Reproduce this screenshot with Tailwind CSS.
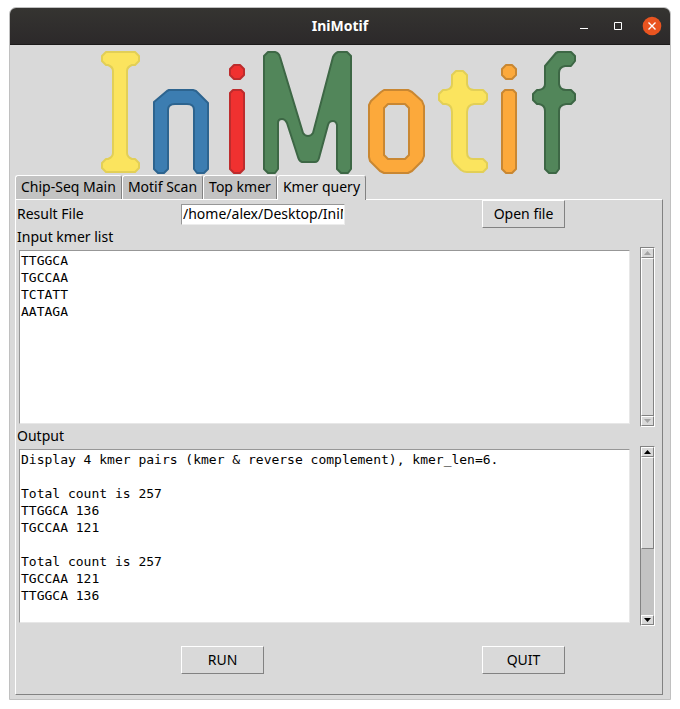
<!DOCTYPE html>
<html lang="en">
<head>
<meta charset="utf-8">
<meta name="viewport" content="width=device-width, initial-scale=1">
<title>IniMotif</title>
<script src="https://cdn.jsdelivr.net/npm/@tailwindcss/browser@4"></script>
</head>
<body class="bg-white px-[9px] pt-[7px] pb-[9px] font-['Noto_Sans',sans-serif] text-[14px] leading-[18px] text-black">
<main class="overflow-hidden rounded-t-[7px] border border-[#c0c0c0] bg-[#d9d9d9]">
  <header class="grid h-[37px] grid-cols-[1fr_auto_1fr] items-center border-b border-[#1c1a1a] bg-linear-to-b from-[#353431] to-[#2c292a] text-white">
    <h1 class="col-start-2 font-bold">IniMotif</h1>
    <div class="flex items-center justify-end gap-[14px] pr-[8px]">
      <button type="button" aria-label="Minimize" class="size-5"><svg viewBox="0 0 20 20" class="size-5"><path d="M6 12.5h8" stroke="#fff"/></svg></button>
      <button type="button" aria-label="Maximize" class="size-5"><svg viewBox="0 0 20 20" class="size-5"><path d="M6.5 6.5h7v7h-7z" fill="none" stroke="#fff"/></svg></button>
      <button type="button" aria-label="Close" class="size-5"><svg viewBox="0 0 20 20" class="size-5"><circle cx="10" cy="10" r="9.3" fill="#e95420"/><path d="M6.5 6.5l7 7M13.5 6.5l-7 7" stroke="#fff" stroke-width="1.4"/></svg></button>
    </div>
  </header>

  <svg role="img" aria-label="IniMotif" viewBox="100 45 480 130" class="mx-auto block w-[480px] max-w-full" stroke-width="2" stroke-linejoin="round">
    <g fill="#fbe45e" stroke="#e2cf57">
      <path d="M106 52H135L139 56V61L135 65H132Q127 67 127 71V153Q127 157 132 159H135L139 163V168L135 172H106L102 168V163L106 159H108Q113 157 113 153V71Q113 67 108 65H106L102 61V56Z"/>
      <path d="M456 71H463L467 75V84Q468 90 474 90H483L487 94V100L483 104H474Q467 105 467 112V152Q467 159 473 159H483L487 163V168L483 172H467Q464 172 461 170L454 163Q452 160 452 157V112Q452 105 446 104H443L439 100V94L443 90H446Q452 89 452 84V75Z"/>
    </g>
    <path fill="#3c7db1" stroke="#2d648f" d="M154 169V102L167 91L169 90H193L196 91L208 103V169L204 173H197L194 169V110Q194 104 187 104H175Q168 104 168 110V169L164 173H158Z"/>
    <g fill="#f03130" stroke="#bd2c2d">
      <path d="M234 65H240L244 69V75L240 79H234L230 75V69Z"/>
      <path d="M233 90H241L244 93V169L240 173H234L230 169V93Z"/>
    </g>
    <g fill="#52865a" stroke="#3d6745">
      <path d="M264 56L268 52H275Q279 53 280 57L303 133Q305 136 308 136Q311 136 313 133L333 57Q335 53 338 52H347L351 56V169L348 173H341L337 169V125Q336 121 333 121Q329 121 328 125L319 158Q318 162 315 162H302Q299 161 298 157L287 123Q285 119 282 119Q278 119 278 123V169L275 173H268L264 169Z"/>
      <path d="M545 66L556 53L558 52H571L575 56V61L571 66H565Q559 67 559 73V84Q560 90 566 90H571L575 94V100L571 104H566Q559 105 559 111V169L556 173H549L545 169V111Q545 105 539 104H537L533 100V94L537 90H539Q545 89 545 84Z"/>
    </g>
    <g fill="#fca93b" stroke="#c98732">
      <path fill-rule="evenodd" d="M384 90H408L412 92L422 101L424 106V156L422 161L412 171L408 173H384L380 171L370 161L369 157V105L371 101L381 92ZM388 104L384 108V155L388 159H405L409 155V108L405 104Z"/>
      <path d="M506 65H512L516 69V75L512 79H506L502 75V69Z"/>
      <path d="M505 90H513L516 93V169L512 173H506L502 169V93Z"/>
    </g>
  </svg>

  <div class="pr-[7px] pb-[4px] pl-[5px]">
    <nav role="tablist" class="flex h-[24px] items-stretch">
      <button type="button" role="tab" class="rounded-t-[3px] border border-b-0 border-t-white border-r-[#828282] border-l-white bg-[#c3c3c3] px-[5px] pb-px">Chip-Seq Main</button>
      <button type="button" role="tab" class="rounded-t-[3px] border border-b-0 border-t-white border-r-[#828282] border-l-white bg-[#c3c3c3] px-[5px] pb-px">Motif Scan</button>
      <button type="button" role="tab" class="rounded-t-[3px] border border-b-0 border-t-white border-r-[#828282] border-l-white bg-[#c3c3c3] px-[5px] pb-px">Top kmer</button>
      <button type="button" role="tab" aria-selected="true" class="relative -mb-px rounded-t-[3px] border border-b-0 border-t-white border-r-[#828282] border-l-white bg-[#d9d9d9] px-[5px] pb-[2px]">Kmer query</button>
    </nav>

    <section class="border border-t-white border-r-[#828282] border-b-[#828282] border-l-white">
      <div class="grid grid-cols-[165fr_301fr_180fr] items-center">
        <label for="result" class="pb-px pl-px">Result File</label>
        <input id="result" type="text" value="/home/alex/Desktop/IniMotif" class="h-[21px] w-[164px] border border-t-[#979797] border-r-[#ececec] border-b-[#ececec] border-l-[#979797] bg-white px-px pb-px outline-none">
        <button type="button" class="h-[28px] w-[83px] border border-t-white border-r-[#828282] border-b-[#828282] border-l-white pb-px">Open file</button>
      </div>

      <label for="kmers" class="block h-[19px] pl-px">Input kmer list</label>
      <div class="flex h-[180px] pr-[7px] pl-[3px]">
        <textarea id="kmers" spellcheck="false" class="my-[3px] mr-[10px] min-w-0 flex-1 resize-none overflow-hidden border border-t-[#979797] border-r-[#e7e7e7] border-b-[#e7e7e7] border-l-[#979797] bg-white px-px py-px font-['DejaVu_Sans_Mono',monospace] text-[13px] leading-[17px] outline-none">TTGGCA
TGCCAA
TCTATT
AATAGA</textarea>
        <div class="flex w-[15px] flex-col border border-t-[#828282] border-r-white border-b-white border-l-[#828282] bg-[#c3c3c3]">
          <button type="button" aria-label="Scroll up" class="flex h-[10px] items-center justify-center border border-t-white border-r-[#828282] border-b-[#828282] border-l-white bg-[#d9d9d9]"><svg viewBox="0 0 7 4" class="h-[4px] w-[7px]"><path d="M3.5 0L7 4H0Z" fill="#a3a3a3"/></svg></button>
          <div class="flex-1 border border-t-white border-r-[#828282] border-b-[#828282] border-l-white bg-[#d9d9d9]"></div>
          <button type="button" aria-label="Scroll down" class="flex h-[10px] items-center justify-center border border-t-white border-r-[#828282] border-b-[#828282] border-l-white bg-[#d9d9d9]"><svg viewBox="0 0 7 4" class="h-[4px] w-[7px]"><path d="M0 0H7L3.5 4Z" fill="#a3a3a3"/></svg></button>
        </div>
      </div>

      <label for="output" class="block h-[19px] pl-px">Output</label>
      <div class="flex h-[180px] pr-[7px] pl-[3px]">
        <textarea id="output" spellcheck="false" class="my-[3px] mr-[10px] min-w-0 flex-1 resize-none overflow-hidden border border-t-[#979797] border-r-[#e7e7e7] border-b-[#e7e7e7] border-l-[#979797] bg-white px-px py-px font-['DejaVu_Sans_Mono',monospace] text-[13px] leading-[17px] outline-none">Display 4 kmer pairs (kmer &amp; reverse complement), kmer_len=6.

Total count is 257
TTGGCA 136
TGCCAA 121

Total count is 257
TGCCAA 121
TTGGCA 136
</textarea>
        <div class="flex w-[15px] flex-col border border-t-[#828282] border-r-white border-b-white border-l-[#828282] bg-[#c3c3c3]">
          <button type="button" aria-label="Scroll up" class="flex h-[10px] items-center justify-center border border-t-white border-r-[#828282] border-b-[#828282] border-l-white bg-[#d9d9d9]"><svg viewBox="0 0 7 4" class="h-[4px] w-[7px]"><path d="M3.5 0L7 4H0Z"/></svg></button>
          <div class="flex-1">
            <div class="h-[92px] border border-t-white border-r-[#828282] border-b-[#828282] border-l-white bg-[#d9d9d9]"></div>
          </div>
          <button type="button" aria-label="Scroll down" class="flex h-[10px] items-center justify-center border border-t-white border-r-[#828282] border-b-[#828282] border-l-white bg-[#d9d9d9]"><svg viewBox="0 0 7 4" class="h-[4px] w-[7px]"><path d="M0 0H7L3.5 4Z"/></svg></button>
        </div>
      </div>

      <div class="grid grid-cols-[165fr_301fr_180fr] py-5">
        <button type="button" class="col-start-2 h-[28px] w-[83px] border border-t-white border-r-[#828282] border-b-[#828282] border-l-white pb-px">RUN</button>
        <button type="button" class="h-[28px] w-[83px] border border-t-white border-r-[#828282] border-b-[#828282] border-l-white pb-px">QUIT</button>
      </div>
    </section>
  </div>
</main>
</body>
</html>
